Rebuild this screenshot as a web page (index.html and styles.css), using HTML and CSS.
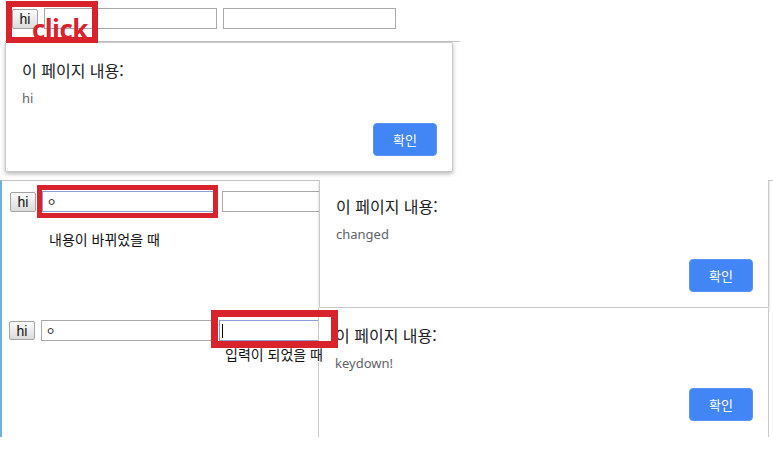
FILE: index.html
```html
<!DOCTYPE html>
<html lang="ko">
<head>
<meta charset="utf-8">
<title>이벤트 예제</title>
<link rel="stylesheet" href="styles.css">
</head>
<body>
<main class="page">
  <section class="shot shot-1">
    <div class="row row-1">
      <button class="hi">hi</button>
      <div class="field"></div>
      <div class="field"></div>
    </div>
    <div class="rule"></div>
    <div class="mark mark-1"></div>
    <span class="click">click</span>
    <div class="dialog dialog-1">
      <div class="dialog-title">이 페이지 내용:</div>
      <div class="dialog-msg">hi</div>
      <div class="dialog-actions"><button class="ok">확인</button></div>
    </div>
  </section>

  <section class="shot shot-2">
    <div class="row row-2">
      <button class="hi">hi</button>
      <div class="field focus"><span class="jamo">ㅇ</span></div>
      <div class="field"></div>
    </div>
    <p class="note note-2">내용이 바뀌었을 때</p>
    <div class="mark mark-2"></div>
    <div class="dialog dialog-2">
      <div class="dialog-title">이 페이지 내용:</div>
      <div class="dialog-msg">changed</div>
      <div class="dialog-actions"><button class="ok">확인</button></div>
    </div>
  </section>

  <section class="shot shot-3">
    <div class="row row-3">
      <button class="hi">hi</button>
      <div class="field"><span class="jamo">ㅇ</span></div>
      <div class="field focus"><span class="caret"></span></div>
    </div>
    <p class="note note-3">입력이 되었을 때</p>
    <div class="mark mark-3"></div>
    <div class="dialog dialog-3">
      <div class="dialog-title">이 페이지 내용:</div>
      <div class="dialog-msg">keydown!</div>
      <div class="dialog-actions"><button class="ok">확인</button></div>
    </div>
  </section>
</main>
</body>
</html>
```

FILE: styles.css
```css
* { box-sizing: border-box; }

html, body {
  margin: 0;
  background: #ffffff;
}

body {
  font-family: "Liberation Sans", Arial, "Noto Sans CJK KR", sans-serif;
  color: #000;
  width: 773px;
  height: 456px;
  overflow: hidden;
}

.page {
  display: flex;
  flex-direction: column;
}

.shot {
  position: relative;
}

.shot-1 {
  height: 180px;
}

.shot-2 {
  height: 128px;
  border-top: 1px solid #c4c4c4;
  border-left: 2px solid #72b2d6;
}

.shot-3 {
  height: 129px;
  border-left: 2px solid #72b2d6;
}

/* rows of controls */
.row {
  display: flex;
  align-items: center;
}

.row-1 {
  padding: 8px 0 0 12px;
  gap: 6px;
}

.row-2 {
  padding: 10px 0 0 8px;
  gap: 6px;
}

.row-2 .field + .field {
  margin-left: 2px;
}

.row-3 {
  padding: 12px 0 0 7px;
  gap: 6px;
}

.hi {
  width: 26px;
  height: 20px;
  padding: 0;
  margin: 0;
  border: 1px solid #a3a3a3;
  border-radius: 2px;
  background: linear-gradient(#fbfbfb, #dcdcdc);
  font-family: "Liberation Sans", Arial, sans-serif;
  font-size: 14px;
  line-height: 18px;
  color: #111;
}

.row-3 .hi {
  height: 19px;
}

.field {
  width: 173px;
  height: 21px;
  border: 1px solid #a9a9a9;
  background: #fff;
  display: flex;
  align-items: center;
  padding: 0 4px;
}

.row-2 .field,
.row-3 .field {
  width: 172px;
}

.field.focus {
  border-color: #8aa0d6;
}

.jamo {
  font-family: "Noto Sans CJK KR", sans-serif;
  font-size: 10px;
  line-height: 1;
  color: #000;
}

.caret {
  width: 1px;
  height: 14px;
  background: #000;
  margin-left: -2px;
}

.rule {
  margin: 12px 0 0 5px;
  width: 455px;
  border-top: 1px solid #c6c6c6;
}

/* notes under the fields */
.note {
  margin: 0;
  font-family: "Noto Sans CJK KR", sans-serif;
  font-size: 14px;
  line-height: 16px;
  color: #111;
}

.note-2 {
  margin: 19px 0 0 47px;
}

.note-3 {
  position: relative;
  z-index: 4;
  width: fit-content;
  background: #fff;
  margin: 5px 0 0 223px;
  padding-right: 1px;
}

/* red annotation marks */
.mark {
  position: absolute;
  border: 6px solid #d8232d;
  z-index: 5;
}

.mark-1 {
  left: 6px;
  top: 1px;
  width: 92px;
  height: 42px;
}

.mark-2 {
  left: 35px;
  top: 4px;
  width: 181px;
  height: 33px;
  border-width: 5px;
}

.mark-3 {
  left: 209px;
  top: 2px;
  width: 127px;
  height: 38px;
  border-width: 7px;
}

.click {
  position: absolute;
  left: 32px;
  top: 16px;
  z-index: 6;
  font-family: "Open Sans", "Noto Sans", sans-serif;
  font-weight: 700;
  font-size: 26px;
  line-height: 26px;
  letter-spacing: -0.6px;
  color: #d8232d;
}

/* alert dialogs */
.dialog {
  position: absolute;
  z-index: 3;
  display: flex;
  flex-direction: column;
  justify-content: flex-end;
  background: #fff;
  border: 1px solid #c9c9c9;
  border-radius: 2px;
  padding: 0 15px 15px 16px;
}

.dialog-1 {
  left: 5px;
  top: 42px;
  width: 448px;
  height: 130px;
  box-shadow: 0 2px 4px rgba(0, 0, 0, 0.28);
}

.dialog-2 {
  left: 317px;
  top: -1px;
  width: 450px;
  height: 128px;
  border-top: 0;
  border-radius: 0 0 2px 2px;
  box-shadow: 0 2px 3px rgba(0, 0, 0, 0.22);
}

.dialog-3 {
  left: 316px;
  top: 0;
  width: 451px;
  height: 129px;
  border-top: 0;
  border-bottom: 0;
  border-radius: 0;
  padding-bottom: 16px;
}

.dialog-title {
  font-family: "Noto Sans CJK KR", sans-serif;
  font-size: 16px;
  line-height: 20px;
  color: #202124;
  margin-bottom: 10px;
}

.dialog-msg {
  font-family: "Noto Sans", "Open Sans", sans-serif;
  font-size: 13px;
  line-height: 17px;
  color: #5f6368;
  margin-bottom: 16px;
}

.dialog-actions {
  display: flex;
  justify-content: flex-end;
}

.ok {
  width: 64px;
  height: 33px;
  margin: 0;
  padding: 0;
  border: 1px solid #5b95f5;
  border-radius: 4px;
  background: #4285f4;
  color: #fff;
  font-family: "Noto Sans CJK KR", sans-serif;
  font-size: 13px;
  line-height: 31px;
}
```
